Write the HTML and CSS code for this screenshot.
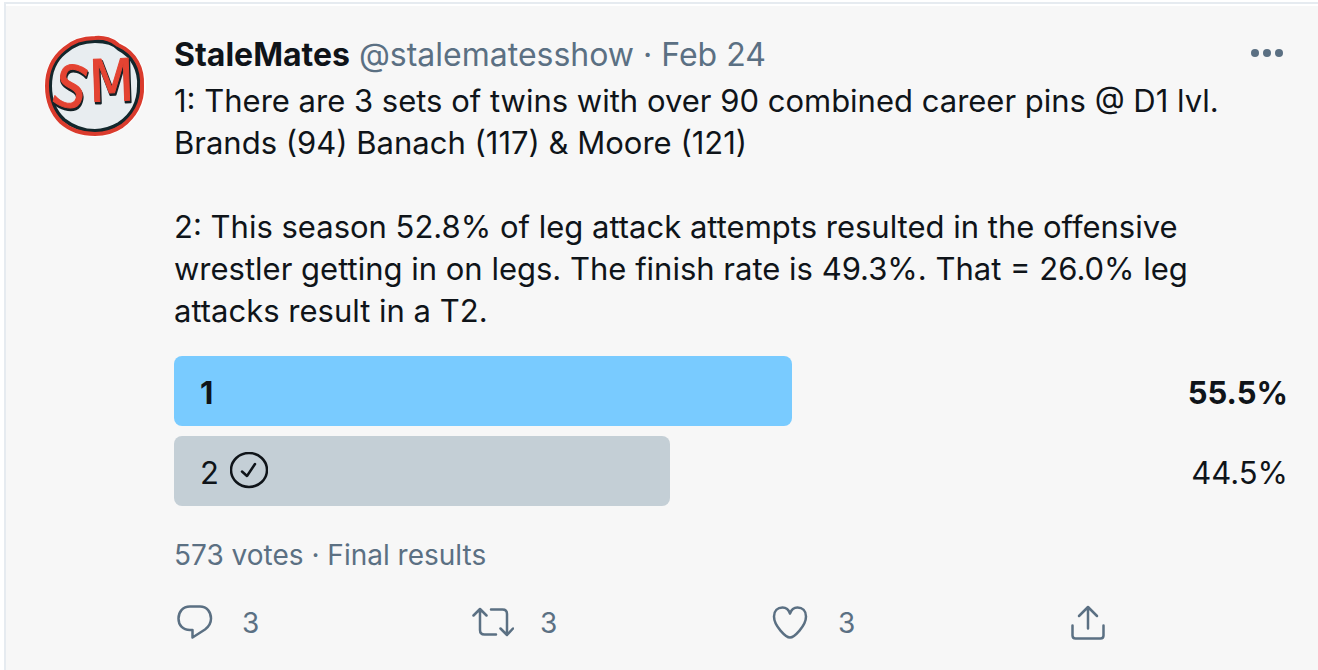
FILE: index.html
```html
<!DOCTYPE html>
<html lang="en">
<head>
<meta charset="utf-8">
<meta name="viewport" content="width=device-width, initial-scale=1">
<title>StaleMates on Twitter</title>
<link rel="stylesheet" href="styles.css">
</head>
<body>
<main class="timeline">
  <article class="tweet">
    <a class="avatar" href="#" aria-label="StaleMates profile">
      <svg viewBox="0 0 102 102" aria-hidden="true">
        <circle cx="51" cy="51" r="51" fill="#fff"/>
        <path d="M51 6C61 6 70 8 75 14C89 21 96 36 95 51C95 68 87 81 75 89C66 94 59 96 51 96C40 96 29 92 20 85C10 76 6 65 6 51C6 38 11 25 21 17C30 9 40 6 51 6Z" fill="#e8edf0" stroke="#12272c" stroke-width="4"/>
        <path d="M51 3C60 2 69 5 74 10C92 18 99 34 98 51C99 68 90 82 78 91C69 97 60 99 51 99C38 99 26 95 17 87C8 78 3 65 3 51C3 36 9 23 20 14C29 6 38 3 51 3Z" fill="none" stroke="#da3b2d" stroke-width="4"/>
        <g class="logo-letters">
          <g class="logo-shadow">
            <text x="11" y="75" transform="rotate(16 29 53)">S</text>
            <text x="46" y="68" transform="rotate(-2 68 48)">M</text>
          </g>
          <g class="logo-ink">
            <text x="10" y="73" transform="rotate(16 29 53)">S</text>
            <text x="45" y="66" transform="rotate(-2 68 48)">M</text>
          </g>
        </g>
      </svg>
    </a>
    <div class="content">
      <header class="header">
        <div class="byline">
          <a class="name" href="#">StaleMates</a>
          <a class="muted" href="#">@stalematesshow</a>
          <span class="muted">·</span>
          <a class="muted" href="#"><time>Feb 24</time></a>
        </div>
        <button class="more" type="button" aria-label="More">
          <svg width="34" height="10" viewBox="0 0 34 10"><circle cx="5" cy="5" r="4"/><circle cx="17" cy="5" r="4"/><circle cx="29" cy="5" r="4"/></svg>
        </button>
      </header>
      <p class="text">1: There are 3 sets of twins with over 90 combined career pins @ D1 lvl.<br>Brands (94) Banach (117) &amp; Moore (121)</p>
      <p class="text">2: This season 52.8% of leg attack attempts resulted in the offensive<br>wrestler getting in on legs. The finish rate is 49.3%. That = 26.0% leg<br>attacks result in a T2.</p>
      <ul class="poll">
        <li class="choice winner">
          <div class="track"><div class="bar" style="width:55.5%">1</div></div>
          <span class="percent">55.5%</span>
        </li>
        <li class="choice">
          <div class="track"><div class="bar" style="width:44.5%">2
            <svg class="check" viewBox="0 0 38 38" role="img" aria-label="Your vote"><ellipse cx="19" cy="18" rx="18" ry="17"/><path d="M12 19.500l5 4.500 8-12"/></svg>
          </div></div>
          <span class="percent">44.5%</span>
        </li>
      </ul>
      <p class="votes">573 votes · Final results</p>
      <footer class="actions">
        <button class="action" type="button" aria-label="3 replies">
          <svg viewBox="0 0 42 42"><path d="M16 4.500h10C33 4.500 37 10 37 16.500c0 5-2 8-6 11L18.500 35.500V28H16C8.500 28 4.500 23 4.500 16.500S8.500 4.500 16 4.500Z"/></svg>
          <span>3</span>
        </button>
        <button class="action" type="button" aria-label="3 retweets">
          <svg viewBox="0 0 42 42"><path d="M1.500 13.500L8 7l6.500 6.500M8 8v20q0 4.500 4.500 4.500H24M19 7.500h11.500q4.500 0 4.500 4.500v20M28.500 26.500L35 33l6-6.500"/></svg>
          <span>3</span>
        </button>
        <button class="action" type="button" aria-label="3 likes">
          <svg viewBox="0 0 42 42"><path d="M20 35.500C16 35.500 4 24 4 14.500C4 9 7.500 5.500 12.500 5.500c4 0 6.500 3 7.500 6c1-3 3.500-6 7.500-6C32.500 5.500 36 9 36 14.500C36 24 24 35.500 20 35.500Z"/></svg>
          <span>3</span>
        </button>
        <button class="action" type="button" aria-label="Share">
          <svg viewBox="0 0 42 42"><path d="M11 14L20 5l9 9M20 6v20.500M4.500 23.500v10q0 3 3 3h25q3 0 3-3v-10"/></svg>
        </button>
      </footer>
    </div>
  </article>
</main>
</body>
</html>
```
FILE: styles.css
```css
* {
  box-sizing: border-box;
}

body {
  margin: 0;
  background: #fff;
  color: #0f1419;
  font: 31px/42px Inter, "Liberation Sans", sans-serif;
}

a {
  color: inherit;
  text-decoration: none;
}

button {
  padding: 0;
  border: 0;
  background: none;
  color: inherit;
  font: inherit;
  cursor: pointer;
}

.timeline {
  margin: 2px 0 0 4px;
  border-top: 2px solid #e6ebf0;
  border-left: 2px solid #e6ebf0;
}

.tweet {
  display: flex;
  gap: 28px;
  margin-top: 2px;
  padding: 28px 30px 26px 38px;
  background: #f7f7f7;
}

.avatar {
  flex: none;
  width: 102px;
  height: 102px;
  margin-top: 1px;
}

.avatar svg {
  display: block;
}

.logo-letters {
  font-family: "DejaVu Sans Condensed", "DejaVu Sans", sans-serif;
  font-size: 58px;
  stroke-linejoin: round;
}

.logo-shadow {
  fill: #142126;
  stroke: #142126;
  stroke-width: 2px;
}

.logo-ink {
  fill: #e44332;
  stroke: #e44332;
  stroke-width: 1px;
}

.content {
  flex: 1;
  min-width: 0;
}

.header {
  display: flex;
  justify-content: space-between;
  margin-bottom: 4px;
  font-size: 32px;
}

.byline {
  display: flex;
  gap: 9px;
}

.name {
  font-weight: 700;
}

.muted {
  color: #5b7083;
}

.more {
  display: flex;
  align-items: center;
  padding: 0 4px 4px 0;
  color: #5b7083;
  fill: currentColor;
}

.text {
  margin: 0 0 42px;
}

.poll {
  display: grid;
  gap: 10px;
  margin: -18px 0 28px;
  padding: 0;
  list-style: none;
}

.choice {
  position: relative;
  display: flex;
  align-items: center;
}

.track {
  flex: 1;
}

.bar {
  display: flex;
  align-items: center;
  gap: 11px;
  height: 70px;
  padding: 4px 26px 0;
  border-radius: 8px;
  background: #c4cfd6;
}

.percent {
  position: absolute;
  right: 0;
  padding-top: 4px;
}

.winner {
  font-weight: 700;
}

.winner .bar {
  background: #79cbff;
}

.check {
  width: 38px;
  height: 38px;
  margin-bottom: 4px;
  fill: none;
  stroke: currentColor;
  stroke-width: 2.5;
  stroke-linecap: round;
  stroke-linejoin: round;
}

.votes {
  margin: 0 0 26px;
  color: #5b7083;
  font-size: 28px;
}

.actions {
  display: grid;
  grid-template-columns: repeat(3, 298px) auto;
  justify-content: start;
  color: #5b7083;
  font-size: 28px;
}

.action {
  display: flex;
  align-items: center;
  gap: 26px;
}

.action svg {
  width: 42px;
  height: 42px;
  fill: none;
  stroke: currentColor;
  stroke-width: 2.5;
  stroke-linecap: round;
  stroke-linejoin: round;
}
```
